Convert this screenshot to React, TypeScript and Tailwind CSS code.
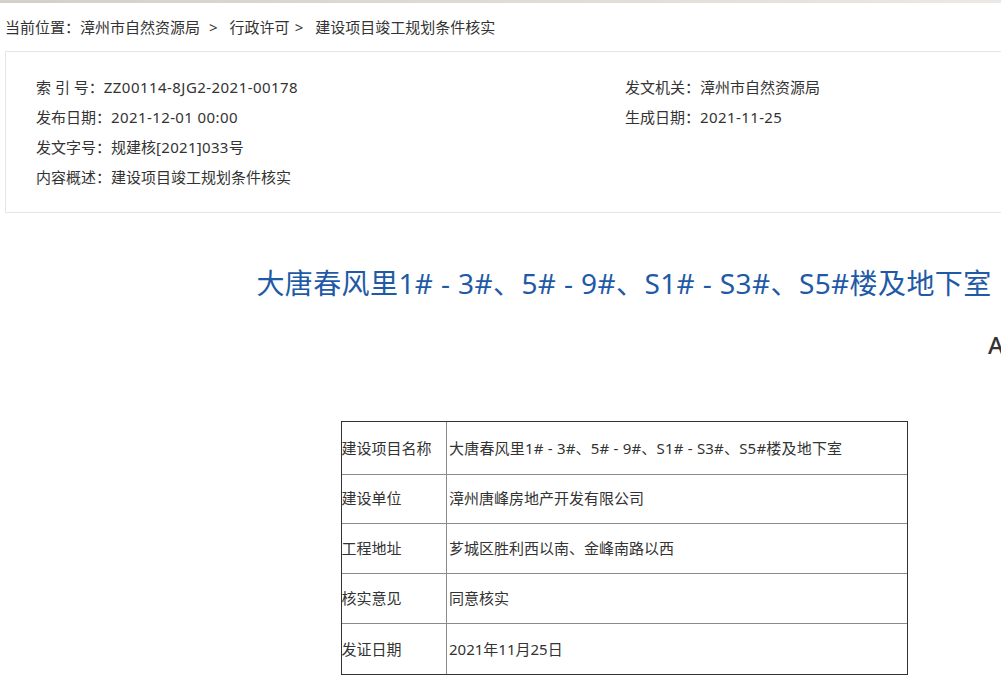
import React from "react";

const font = { fontFamily: '"Noto Sans", "Noto Sans CJK SC", sans-serif' };

const rows: { label: string; value: string; h: string; track?: boolean }[] = [
  { label: "建设项目名称", value: "大唐春风里1# - 3#、5# - 9#、S1# - S3#、S5#楼及地下室", h: "h-[52px]", track: true },
  { label: "建设单位", value: "漳州唐峰房地产开发有限公司", h: "h-[49px]" },
  { label: "工程地址", value: "芗城区胜利西以南、金峰南路以西", h: "h-[50px]" },
  { label: "核实意见", value: "同意核实", h: "h-[50px]" },
  { label: "发证日期", value: "2021年11月25日", h: "h-[51px]" },
];

export default function App() {
  return (
    <div className="w-[1001px] h-[686px] overflow-hidden bg-white text-[#333]" style={font}>
      <div className="h-[3px] bg-gradient-to-r from-[#d3cfcb] via-[#dedad6] to-[#ebe8e5]" />
      <div className="w-[1238px] ml-[5px]">
        <div className="h-[48px] flex items-center text-[15px] whitespace-nowrap">
          <span>当前位置：漳州市自然资源局</span>
          <span className="ml-[9px] mr-[12px]">&gt;</span>
          <span>行政许可</span>
          <span className="ml-[5px] mr-[12px]">&gt;</span>
          <span>建设项目竣工规划条件核实</span>
        </div>
        <div className="border border-[#e6e6e6] pl-[30px] pt-[20px] pb-[20px] text-[15px]">
          <div className="grid grid-cols-[589px_1fr] leading-[30px] whitespace-nowrap">
            <div>
              索 引 号：<span className="tracking-[0.45px]">ZZ00114-8JG2-2021-00178</span>
            </div>
            <div>发文机关：漳州市自然资源局</div>
            <div>
              发布日期：<span className="tracking-[0.4px]">2021-12-01 00:00</span>
            </div>
            <div>
              生成日期：<span className="tracking-[0.4px]">2021-11-25</span>
            </div>
            <div>
              发文字号：规建核<span className="tracking-[0.3px]">[2021]033</span>号
            </div>
            <div />
            <div>内容概述：建设项目竣工规划条件核实</div>
            <div />
          </div>
        </div>
        <h1 className="mt-[50px] text-center text-[28px] leading-[40px] text-[#1f5aa6] whitespace-nowrap font-normal tracking-[0.4px]">
          大唐春风里1# - 3#、5# - 9#、S1# - S3#、S5#楼及地下室
        </h1>
        <div className="mt-[27px] pl-[983px] text-[24px] leading-[30px] font-medium text-[#333]">A</div>
        <div className="mt-[61px] mx-auto w-[567px] border border-[#333]">
          <table className="w-full border-collapse text-[15px]">
            <tbody>
              {rows.map((r, i) => (
                <tr key={r.label} className={`${r.h} ${i < rows.length - 1 ? "border-b border-[#8a8a8a]" : ""}`}>
                  <td className="w-[105px] border-r border-[#8a8a8a] p-0 align-middle whitespace-nowrap">{r.label}</td>
                  <td className={`pl-[2px] align-middle whitespace-nowrap ${r.track ? "tracking-[0.2px]" : ""}`}>{r.value}</td>
                </tr>
              ))}
            </tbody>
          </table>
        </div>
      </div>
    </div>
  );
}
